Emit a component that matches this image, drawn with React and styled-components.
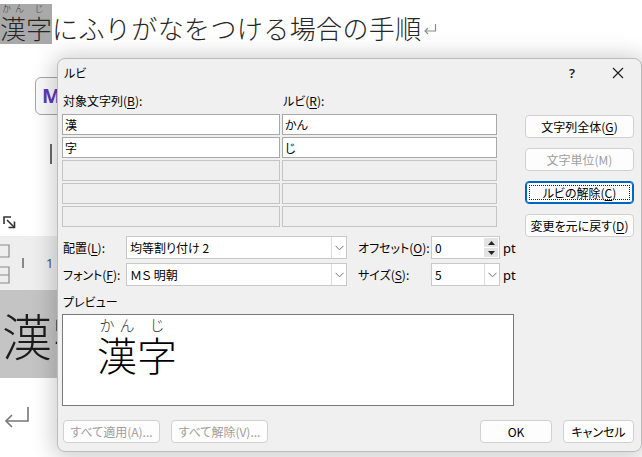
import React from 'react';
import styled, { createGlobalStyle } from 'styled-components';

const GlobalStyle = createGlobalStyle`
  html, body { margin: 0; padding: 0; }
  body {
    width: 642px;
    height: 457px;
    overflow: hidden;
    background: #fff;
    font-family: "Noto Sans CJK JP", sans-serif;
  }
`;

const Screen = styled.div`
  position: relative;
  width: 642px;
  height: 457px;
  overflow: hidden;
  background: #fff;
`;

/* ---------- document behind the dialog ---------- */

const Heading = styled.div`
  display: flex;
  align-items: flex-end;
  height: 44px;
  box-sizing: border-box;
  font-family: "Noto Sans CJK JP", serif;
  font-weight: 300;
  font-size: 26px;
  line-height: 27px;
  color: #262626;
  white-space: nowrap;
`;

const Highlight = styled.span`
  display: inline-flex;
  background: #a9a9a9;
  padding-bottom: 3px;
`;

const RubyChar = styled.span`
  display: inline-flex;
  flex-direction: column;
  align-items: stretch;
`;

const RubyText = styled.span`
  display: flex;
  justify-content: space-around;
  font-size: ${p => p.$size}px;
  line-height: ${p => p.$size}px;
  height: ${p => p.$size}px;
  margin-bottom: ${p => p.$gap || 0}px;
  color: #333;
`;

const HeadText = styled.span`
  padding-bottom: 3px;
  letter-spacing: 0.4px;
`;

const ReturnMark = styled.svg`
  flex: none;
  margin: 0 0 ${p => p.$bottom}px ${p => p.$left}px;
`;

const LeftStrip = styled.div`
  width: 57px;
  display: flex;
  flex-direction: column;
`;

const UpperArea = styled.div`
  height: 192px;
  display: flex;
  padding-top: 19px;
  box-sizing: border-box;
`;

const LauncherCol = styled.div`
  width: 20px;
  padding-left: 3px;
  padding-bottom: 7px;
  box-sizing: border-box;
  display: flex;
  align-items: flex-end;
`;

const VLine = styled.div`
  width: 1px;
  height: 152px;
  margin-left: 3px;
  background: #cfcfcf;
`;

const RibbonCol = styled.div`
  display: flex;
  flex-direction: column;
  margin-left: 16px;
  padding-top: 14px;
`;

const RibbonButton = styled.div`
  width: 34px;
  height: 38px;
  border: 1px solid #a6a6a6;
  border-radius: 6px;
  box-sizing: border-box;
  padding: 8px 0 0 6px;
  font-family: "Noto Sans", sans-serif;
  font-weight: 700;
  font-size: 20px;
  line-height: 20px;
  color: #5a3ab8;
  background: #fafafa;
`;

const SmallBar = styled.div`
  width: 2px;
  height: 20px;
  margin: 29px 0 0 15px;
  background: #6a6a6a;
`;

const Ruler = styled.div`
  height: 54px;
  background: #eeeeee;
  display: flex;
  align-items: center;
  gap: 9px;
  font-family: "Noto Sans", sans-serif;
  font-size: 13px;
  color: #555;
`;

const RulerMarks = styled.svg`
  flex: none;
`;

const RulerNumber = styled.span`
  margin-left: 12px;
`;

const BigHighlight = styled.div`
  height: 88px;
  background: #c4c4c4;
  font-family: "Noto Sans CJK JP", serif;
  font-weight: 300;
  font-size: 50px;
  line-height: 88px;
  color: #1c1c1c;
  white-space: nowrap;
  overflow: hidden;
  padding-left: 2px;
`;

const LowerArea = styled.div`
  padding-top: 28px;
`;

/* ---------- dialog ---------- */

const Dialog = styled.div`
  position: absolute;
  left: 57px;
  top: 58px;
  width: 585px;
  height: 394px;
  box-sizing: border-box;
  background: #f0f0f0;
  border: 1px solid #bcbcbc;
  border-radius: 8px;
  box-shadow: 0 2px 22px 4px rgba(0, 0, 0, 0.2);
  display: flex;
  flex-direction: column;
  font-family: "Noto Sans CJK JP", sans-serif;
  font-feature-settings: "palt";
  font-size: 12px;
  color: #000;
  white-space: nowrap;
`;

const TitleBar = styled.div`
  height: 27px;
  display: flex;
  align-items: center;
  padding-left: 6px;
`;

const Title = styled.div`
  flex: 1;
  line-height: 27px;
`;

const TitleButton = styled.div`
  width: 46px;
  height: 27px;
  display: flex;
  align-items: center;
  justify-content: center;
  font-family: "Noto Sans", sans-serif;
  font-weight: 600;
  font-size: 13px;
  color: #1a1a1a;
`;

const Body = styled.div`
  flex: 1;
  display: flex;
  flex-direction: column;
  padding: 0 7px 0 4px;
`;

const TopSection = styled.div`
  display: flex;
  justify-content: space-between;
  align-items: flex-start;
  height: 141px;
`;

const LeftCol = styled.div`
  width: 435px;
`;

const LabelRow = styled.div`
  display: grid;
  grid-template-columns: 220px 1fr;
  height: 18px;
  line-height: 18px;
  margin-top: 6px;
  margin-bottom: 4px;
  padding-left: 1px;
`;

const U = styled.span`
  text-decoration: underline;
  text-underline-offset: 2px;
`;

const RubyGrid = styled.div`
  display: grid;
  grid-template-columns: 218px 215px;
  grid-auto-rows: 21px;
  gap: 2px;
`;

const Cell = styled.div`
  border: 1px solid ${p => (p.$filled ? '#a8a8a8' : '#c4c4c4')};
  background: ${p => (p.$filled ? '#fff' : '#efefef')};
  box-sizing: border-box;
  padding-left: 2px;
  line-height: 19px;
  font-size: 12px;
`;

const RightCol = styled.div`
  width: 109px;
  padding-top: 29px;
  display: flex;
  flex-direction: column;
  gap: 10px;
`;

const Button = styled.div`
  position: relative;
  width: ${p => p.$w || 109}px;
  height: 23px;
  box-sizing: border-box;
  background: #fdfdfd;
  border: 1px solid ${p => (p.$focused ? '#0067c0' : '#d0d0d0')};
  border-radius: 4px;
  display: flex;
  align-items: center;
  justify-content: center;
  font-size: 12px;
  color: ${p => (p.$disabled ? '#9d9d9d' : '#000')};
  box-shadow: ${p => (p.$focused ? 'inset 0 0 0 1px #0067c0' : 'none')};

  &::after {
    content: '';
    display: ${p => (p.$focused ? 'block' : 'none')};
    position: absolute;
    inset: 3px;
    border: 1px dotted #222;
  }
`;

const FormRows = styled.div`
  display: flex;
  flex-direction: column;
  gap: 4px;
  margin-top: 9px;
`;

const FormRow = styled.div`
  display: flex;
  align-items: center;
  height: 23px;
`;

const FieldLabel = styled.div`
  width: ${p => p.$w}px;
  margin-left: ${p => p.$ml || 0}px;
  padding-left: 1px;
  box-sizing: border-box;
`;

const Field = styled.div`
  width: ${p => p.$w}px;
  height: 23px;
  box-sizing: border-box;
  background: #fff;
  border: 1px solid #c8c8c8;
  display: flex;
  align-items: stretch;
`;

const FieldValue = styled.div`
  flex: 1;
  padding-left: 3px;
  line-height: 21px;
`;

const ArrowBox = styled.div`
  width: 14px;
  border-left: 1px solid #dcdcdc;
  display: flex;
  align-items: center;
  justify-content: center;
`;

const SpinBox = styled.div`
  width: 14px;
  margin: 1px;
  display: flex;
  flex-direction: column;
  gap: 1px;
`;

const SpinHalf = styled.div`
  flex: 1;
  background: #e3e3e3;
  display: flex;
  align-items: center;
  justify-content: center;
`;

const Unit = styled.div`
  margin-left: 3px;
  font-family: "Noto Sans", sans-serif;
  font-size: 13px;
`;

const PreviewLabel = styled.div`
  height: 20px;
  line-height: 20px;
  margin-top: 6px;
  padding-left: 1px;
`;

const Preview = styled.div`
  width: 452px;
  height: 92px;
  box-sizing: border-box;
  margin-top: 2px;
  background: #fff;
  border: 1px solid #7a7a7a;
  padding: 2px 0 0 34px;
  display: flex;
  align-items: flex-start;
  font-family: "Noto Sans CJK JP", serif;
  font-feature-settings: normal;
  font-weight: 300;
  color: #000;
`;

const PreviewBase = styled.span`
  font-size: 40px;
  line-height: 44px;
  width: 40px;
  text-align: center;
`;

const BottomRow = styled.div`
  display: flex;
  align-items: center;
  margin-top: 14px;
  padding-left: 1px;
  gap: 11px;
`;

const Spacer = styled.div`
  flex: 1;
`;

const Chevron = () => (
  <svg width="9" height="6" viewBox="0 0 9 6">
    <path d="M0.5 0.8 L4.5 4.8 L8.5 0.8" fill="none" stroke="#707070" strokeWidth="1" />
  </svg>
);

const Tri = ({ up }) => (
  <svg width="7" height="4" viewBox="0 0 7 4">
    <path d={up ? 'M0 4 L3.5 0 L7 4 Z' : 'M0 0 L3.5 4 L7 0 Z'} fill="#222" />
  </svg>
);

const rows = [
  ['漢', 'かん'],
  ['字', 'じ'],
  ['', ''],
  ['', ''],
  ['', ''],
];

export default function App() {
  return (
    <Screen>
      <GlobalStyle />
      <Heading>
        <Highlight>
          <RubyChar>
            <RubyText $size={9} $gap={1}><span>か</span><span>ん</span></RubyText>
            <span>漢</span>
          </RubyChar>
          <RubyChar>
            <RubyText $size={9} $gap={1}><span>じ</span></RubyText>
            <span>字</span>
          </RubyChar>
        </Highlight>
        <HeadText>にふりがなをつける場合の手順</HeadText>
        <ReturnMark $left={1} $bottom={9} width="14" height="12" viewBox="0 0 14 12">
          <path d="M12.5 1 V8 H2" fill="none" stroke="#8a8a8a" strokeWidth="1.2" />
          <path d="M5 5 L2 8 L5 11" fill="none" stroke="#8a8a8a" strokeWidth="1.2" />
        </ReturnMark>
      </Heading>

      <LeftStrip>
        <UpperArea>
          <LauncherCol>
            <svg width="13" height="13" viewBox="0 0 13 13">
              <path d="M1 8 V1 H8" fill="none" stroke="#333" strokeWidth="1.6" />
              <path d="M4 4 L11 11" fill="none" stroke="#333" strokeWidth="1.6" />
              <path d="M5.5 11.5 H11.5 V5.5" fill="none" stroke="#333" strokeWidth="1.6" />
            </svg>
          </LauncherCol>
          <VLine />
          <RibbonCol>
            <RibbonButton>M</RibbonButton>
            <SmallBar />
          </RibbonCol>
        </UpperArea>
        <Ruler>
          <RulerMarks width="12" height="44" viewBox="0 0 12 44">
            <path d="M0 4 H9 V16 H0" fill="none" stroke="#8a8a8a" strokeWidth="1.2" />
            <path d="M0 26 H9 V42 H0 M0 34 H9" fill="none" stroke="#8a8a8a" strokeWidth="1.2" />
          </RulerMarks>
          <RulerMarks width="4" height="10" viewBox="0 0 4 10">
            <path d="M2 0 V10" stroke="#666" strokeWidth="1.5" />
          </RulerMarks>
          <RulerNumber>1</RulerNumber>
        </Ruler>
        <BigHighlight>漢字</BigHighlight>
        <LowerArea>
          <ReturnMark $left={3} $bottom={0} width="28" height="22" viewBox="0 0 28 22">
            <path d="M25 1 V15 H3" fill="none" stroke="#777" strokeWidth="1.6" />
            <path d="M9 9 L3 15 L9 21" fill="none" stroke="#777" strokeWidth="1.6" />
          </ReturnMark>
        </LowerArea>
      </LeftStrip>

      <Dialog>
        <TitleBar>
          <Title>ルビ</Title>
          <TitleButton>?</TitleButton>
          <TitleButton>
            <svg width="12" height="12" viewBox="0 0 12 12">
              <path d="M1 1 L11 11 M11 1 L1 11" stroke="#1a1a1a" strokeWidth="1.1" />
            </svg>
          </TitleButton>
        </TitleBar>
        <Body>
          <TopSection>
            <LeftCol>
              <LabelRow>
                <span>対象文字列(<U>B</U>):</span>
                <span>ルビ(<U>R</U>):</span>
              </LabelRow>
              <RubyGrid>
                {rows.map(([base, ruby], i) => (
                  <React.Fragment key={i}>
                    <Cell $filled={i < 2}>{base}</Cell>
                    <Cell $filled={i < 2}>{ruby}</Cell>
                  </React.Fragment>
                ))}
              </RubyGrid>
            </LeftCol>
            <RightCol>
              <Button>文字列全体(<U>G</U>)</Button>
              <Button $disabled>文字単位(M)</Button>
              <Button $focused>ルビの解除(<U>C</U>)</Button>
              <Button>変更を元に戻す(<U>D</U>)</Button>
            </RightCol>
          </TopSection>

          <FormRows>
            <FormRow>
              <FieldLabel $w={64}>配置(<U>L</U>):</FieldLabel>
              <Field $w={221}>
                <FieldValue>均等割り付け 2</FieldValue>
                <ArrowBox><Chevron /></ArrowBox>
              </Field>
              <FieldLabel $w={74} $ml={10}>オフセット(<U>O</U>):</FieldLabel>
              <Field $w={69}>
                <FieldValue>0</FieldValue>
                <SpinBox>
                  <SpinHalf><Tri up /></SpinHalf>
                  <SpinHalf><Tri /></SpinHalf>
                </SpinBox>
              </Field>
              <Unit>pt</Unit>
            </FormRow>
            <FormRow>
              <FieldLabel $w={64}>フォント(<U>F</U>):</FieldLabel>
              <Field $w={221}>
                <FieldValue>ＭＳ 明朝</FieldValue>
                <ArrowBox><Chevron /></ArrowBox>
              </Field>
              <FieldLabel $w={74} $ml={10}>サイズ(<U>S</U>):</FieldLabel>
              <Field $w={69}>
                <FieldValue>5</FieldValue>
                <ArrowBox><Chevron /></ArrowBox>
              </Field>
              <Unit>pt</Unit>
            </FormRow>
          </FormRows>

          <PreviewLabel>プレビュー</PreviewLabel>
          <Preview>
            <RubyChar>
              <RubyText $size={15}><span>か</span><span>ん</span></RubyText>
              <PreviewBase>漢</PreviewBase>
            </RubyChar>
            <RubyChar>
              <RubyText $size={15}><span>じ</span></RubyText>
              <PreviewBase>字</PreviewBase>
            </RubyChar>
          </Preview>

          <BottomRow>
            <Button $w={97} $disabled>すべて適用(A)...</Button>
            <Button $w={97} $disabled>すべて解除(V)...</Button>
            <Spacer />
            <Button $w={72}>OK</Button>
            <Button $w={71}>キャンセル</Button>
          </BottomRow>
        </Body>
      </Dialog>
    </Screen>
  );
}
